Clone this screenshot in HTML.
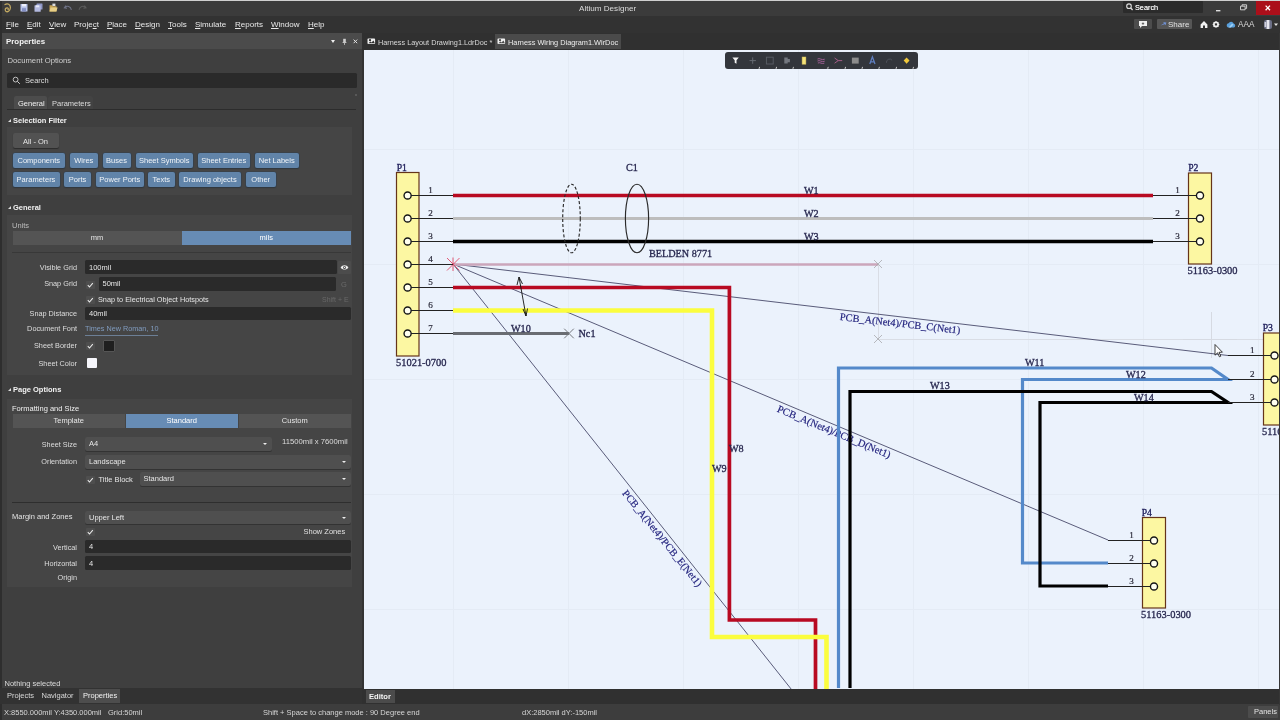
<!DOCTYPE html>
<html lang="en">
<head>
<meta charset="utf-8">
<title>Altium Designer</title>
<style>
*{box-sizing:border-box;margin:0;padding:0}
html,body{width:1280px;height:720px;overflow:hidden;background:#3f3f3f}
body{position:relative;font-family:"Liberation Sans",sans-serif;font-size:7.5px;color:#e4e4e4;line-height:1}
.a{position:absolute}
.t{position:absolute;white-space:nowrap;line-height:10px;height:10px}
#root{position:absolute;left:0;top:0;width:1280px;height:720px;will-change:transform}
.b{font-weight:bold}
u{text-decoration:underline;text-underline-offset:0.6px;text-decoration-thickness:0.6px}
/* chrome */
#topline{left:0;top:0;width:1280px;height:1px;background:#cfcfcf}
#title{left:0;top:1px;width:1280px;height:15px;background:#3b3b3b}
#menu{left:0;top:16px;width:1280px;height:17px;background:#323232}
#tabbar{left:362px;top:33px;width:918px;height:17px;background:#303030}
#lpanel{left:0;top:33px;width:362px;height:671px;background:#3f3f3f}
#phead{left:2px;top:33px;width:360px;height:16px;background:#4b4b4b}
#gap{left:362px;top:50px;width:3px;height:654px;background:#333}
#canvas{left:364px;top:50px;width:916px;height:639px;background:#ebf2fc}
#edbar{left:362px;top:689px;width:918px;height:15px;background:#303030}
#status{left:0;top:704px;width:1280px;height:16px;background:#3d3d3d}
.in{position:absolute;background:#2a2a2a;border-radius:1.5px}
.dd{position:absolute;background:#4f4f4f;border-radius:2px;box-shadow:0 1px 0 #333}
.chip{position:absolute;height:15px;background:#6184a9;border-radius:2px;color:#f0f4f8;text-align:center;line-height:15px;font-size:7.5px;white-space:nowrap;box-shadow:0 0 0 0.6px #33414f,0 1px 1px #2e2e2e}
.seg{position:absolute;height:13.5px;line-height:14.5px;text-align:center;background:#545454;color:#e6e6e6}
.seg.on{background:#678cb5;color:#fff}
.lbl{position:absolute;white-space:nowrap;line-height:10px;height:10px;text-align:right;width:80px;font-size:7.3px}
.cb{position:absolute;width:8.5px;height:8.5px;background:#4e4e4e;border-radius:1px}
.cb svg{position:absolute;left:0;top:0}
.sect{position:absolute;left:13px;font-weight:bold;color:#f2f2f2;white-space:nowrap;line-height:10px}
.tri{position:absolute;left:8px;width:0;height:0;border-left:3px solid transparent;border-bottom:3px solid #ddd}
.car{position:absolute;width:0;height:0;border-left:2.6px solid transparent;border-right:2.6px solid transparent;border-top:2.8px solid #eee}
</style>
</head>
<body>
<div id="root">
<div class="a" id="title"></div>
<div class="a" id="menu"></div>
<div class="a" id="lpanel"></div>
<div class="a" id="phead"></div>
<div class="a" id="tabbar"></div>
<div class="a" id="gap"></div>
<div class="a" id="canvas"></div>
<div class="a" id="edbar"></div>
<div class="a" style="left:1278.5px;top:33px;width:1.5px;height:672px;background:#363636;z-index:5"></div>
<div class="a" id="status"></div>
<div class="a" style="left:0;top:1px;width:1.5px;height:719px;background:#2e2e2e"></div>
<div class="a" id="topline"></div>


<!-- title bar icons -->
<svg class="a" style="left:0;top:1px" width="100" height="15" viewBox="0 0 100 15">
 <path d="M5 3.6 C7.6 1.8 10.6 3.6 10.4 6.8 C10.2 10 7.4 11.6 5.8 10.2 C4.4 8.8 5.6 6.6 7.4 6.8 C8.4 7 8.6 8 8 8.6" fill="none" stroke="#c4aa62" stroke-width="1.25" stroke-linecap="round"/>
 <rect x="20.5" y="3" width="7" height="7.5" rx="0.6" fill="#b9c4ea"/><rect x="22" y="3" width="4" height="2.4" fill="#eef0fb"/><rect x="22" y="7.2" width="4" height="3.3" fill="#8490c4"/>
 <rect x="36.5" y="2.5" width="6" height="6" rx="0.5" fill="#8f97c6"/><rect x="34.5" y="4.3" width="6.2" height="6.4" rx="0.5" fill="#b3b9e0"/><rect x="35.8" y="4.3" width="3.4" height="2" fill="#e6e8f6"/>
 <path d="M49.5 4.2 h2.6 l0.8 1 h3.6 v5.4 h-7 Z" fill="#c7a555"/><path d="M50.6 6.6 h7 l-1.2 4 h-6.9 Z" fill="#e8cf86"/><rect x="52.4" y="2.6" width="3" height="2.4" fill="#ddd"/>
 <path d="M66 4.6 l-1.6 2.2 l2.6 0.4 M64.8 6.4 C67 4.4 70.6 5 71.4 8.8" fill="none" stroke="#6f7387" stroke-width="1.1"/>
 <path d="M84.4 4.6 l1.6 2.2 l-2.6 0.4 M85.6 6.4 C83.4 4.4 79.8 5 79 8.8" fill="none" stroke="#5b5b5b" stroke-width="1.1"/>
</svg>
<div class="t" style="left:579px;top:4px;font-size:8.1px;color:#dcdcdc">Altium Designer</div>
<!-- search box -->
<div class="a" style="left:1123px;top:1px;width:80px;height:12px;background:#2b2b2b;border-radius:1px"></div>
<svg class="a" style="left:1125px;top:2px" width="10" height="10" viewBox="0 0 10 10"><circle cx="4" cy="4.2" r="2.3" fill="none" stroke="#ddd" stroke-width="1.1"/><path d="M5.7 6 L7.6 8" stroke="#ddd" stroke-width="1.3"/></svg>
<div class="t" style="left:1135px;top:3px;font-size:7.3px;color:#ececec;text-shadow:0 0 0.3px #ececec">Search</div>
<!-- window buttons -->
<div class="a" style="left:1256px;top:1px;width:24px;height:14px;background:#ab0f1a"></div>
<svg class="a" style="left:1200px;top:1px" width="80" height="15" viewBox="0 0 80 15">
 <rect x="16" y="9" width="4.4" height="1.4" fill="#ddd"/>
 <path d="M40.5 5.2 h4.6 v3.6 h-4.6 Z M42 5 v-1.2 h4.6 v3.6 h-1.3" fill="none" stroke="#ddd" stroke-width="0.9"/>
 <path d="M65.6 4.6 l4.4 4.6 M70 4.6 l-4.4 4.6" stroke="#fff" stroke-width="1.3"/>
</svg>


<div class="t" style="left:6px;top:20px;font-size:8px;color:#e8e8e8"><u>F</u>ile</div>
<div class="t" style="left:27px;top:20px;font-size:8px;color:#e8e8e8"><u>E</u>dit</div>
<div class="t" style="left:49px;top:20px;font-size:8px;color:#e8e8e8"><u>V</u>iew</div>
<div class="t" style="left:74px;top:20px;font-size:8px;color:#e8e8e8">Proje<u>c</u>t</div>
<div class="t" style="left:107px;top:20px;font-size:8px;color:#e8e8e8"><u>P</u>lace</div>
<div class="t" style="left:135px;top:20px;font-size:8px;color:#e8e8e8"><u>D</u>esign</div>
<div class="t" style="left:168px;top:20px;font-size:8px;color:#e8e8e8"><u>T</u>ools</div>
<div class="t" style="left:195px;top:20px;font-size:8px;color:#e8e8e8"><u>S</u>imulate</div>
<div class="t" style="left:235px;top:20px;font-size:8px;color:#e8e8e8"><u>R</u>eports</div>
<div class="t" style="left:271px;top:20px;font-size:8px;color:#e8e8e8"><u>W</u>indow</div>
<div class="t" style="left:308px;top:20px;font-size:8px;color:#e8e8e8"><u>H</u>elp</div>
<!-- right side menu icons -->
<div class="a" style="left:1134px;top:19px;width:18px;height:10px;background:#4c4c4c;border-radius:1px"></div>
<svg class="a" style="left:1138px;top:20px" width="10" height="9" viewBox="0 0 10 9"><path d="M1 1 h8 v5 h-5 l-2 2 v-2 h-1 Z" fill="#f0f0f0"/><path d="M5 2.4 v2.4 M3.8 3.6 h2.4" stroke="#4c4c4c" stroke-width="0.8"/></svg>
<div class="a" style="left:1157px;top:19px;width:35px;height:10px;background:#565656;border-radius:1px"></div>
<svg class="a" style="left:1160px;top:21px" width="7" height="6" viewBox="0 0 7 6"><path d="M0.5 4.5 L4 2.2 L3.2 1 L6.4 1.4 L5.6 4.2 L4.8 3.2 Z" fill="#6f8fd0"/></svg>
<div class="t" style="left:1168px;top:20px;font-size:8px;color:#e2e2e2">Share</div>
<svg class="a" style="left:1198px;top:18px" width="82" height="13" viewBox="0 0 82 13">
 <path d="M2.6 6.4 L6 3 L9.4 6.4 V10 H7 V7.6 H5 V10 H2.6 Z" fill="#f2f2f2"/>
 <circle cx="18" cy="6.4" r="2.2" fill="none" stroke="#f2f2f2" stroke-width="1.5"/><path d="M18 3 v6.8 M14.6 6.4 h6.8 M15.6 4 l4.8 4.8 M20.4 4 l-4.8 4.8" stroke="#f2f2f2" stroke-width="0.9"/><circle cx="18" cy="6.4" r="1.1" fill="#323232"/>
 <path d="M30 9.4 a2.2 2.2 0 0 1 0.6 -4.2 a2.8 2.8 0 0 1 5.2 0.6 a1.9 1.9 0 0 1 0.2 3.6 Z" fill="#5aa0dc"/><path d="M30.6 9.4 l3.4 -3.6 l1.6 0.6 l-2.8 3 Z" fill="#9fd0f4"/>
 <rect x="66" y="2" width="8" height="9" rx="2" fill="#6b6f86"/><rect x="68.6" y="2" width="2.8" height="9" fill="#e6e6ee"/><rect x="66.6" y="4" width="1.6" height="5" fill="#cfd0dc"/>
 <path d="M76 5.6 h4 l-2 2.4 Z" fill="#e6e6e6"/>
</svg>
<div class="t" style="left:1238px;top:20px;font-size:8.2px;color:#dcdcdc">AAA</div>

<div class="t b" style="left:6px;top:36.5px;font-size:7.9px;color:#f4f4f4">Properties</div>
<div class="car" style="left:330.6px;top:39.5px;border-top-color:#f0f0f0;border-left-width:2.9px;border-right-width:2.9px;border-top-width:3.4px"></div>
<svg class="a" style="left:341px;top:37.5px" width="7" height="9" viewBox="0 0 7 9"><rect x="2.2" y="0.8" width="2.6" height="3.4" fill="#cfcfcf"/><rect x="1.6" y="4" width="3.8" height="0.9" fill="#cfcfcf"/><rect x="3.1" y="4.9" width="0.8" height="2" fill="#cfcfcf"/></svg>
<svg class="a" style="left:352px;top:38px" width="7" height="7" viewBox="0 0 7 7"><path d="M1.6 1.6 L5.2 5.2 M5.2 1.6 L1.6 5.2" stroke="#e2e2e2" stroke-width="1"/></svg>
<div class="t" style="left:7.5px;top:55.5px;color:#cfcfcf;font-size:7.7px">Document Options</div>
<div class="in" style="left:7px;top:72.5px;width:350px;height:15.0px"></div>
<svg class="a" style="left:12px;top:76px" width="9" height="9" viewBox="0 0 9 9"><circle cx="3.6" cy="3.6" r="2.4" fill="none" stroke="#cfcfcf" stroke-width="0.9"/><path d="M5.4 5.4 L7.8 7.8" stroke="#cfcfcf" stroke-width="1"/></svg>
<div class="t" style="left:25px;top:75.5px;color:#dcdcdc">Search</div>
<div class="a" style="left:14px;top:96px;width:33px;height:13px;background:#4c4c4c;border-radius:2px 2px 0 0"></div>
<div class="a" style="left:48px;top:96px;width:45px;height:13px;background:#434343;border-radius:2px 2px 0 0"></div>
<div class="a" style="left:7px;top:109px;width:349px;height:1px;background:#2c2c2c"></div>
<div class="a" style="left:354.5px;top:94px;width:2px;height:1.5px;background:#585858"></div>
<div class="t" style="left:18px;top:98.5px;color:#f0f0f0">General</div>
<div class="t" style="left:52px;top:98.5px;color:#dcdcdc">Parameters</div>
<div class="a" style="left:7px;top:127px;width:345px;height:68px;background:#454545"></div>
<div class="a" style="left:7px;top:215px;width:345px;height:160px;background:#454545"></div>
<div class="a" style="left:7px;top:399px;width:345px;height:188px;background:#454545"></div>
<div class="tri" style="top:118.5px"></div><div class="sect" style="top:115.5px">Selection Filter</div>
<div class="a" style="left:13px;top:133px;width:46px;height:15px;background:#525252;border-radius:2px;box-shadow:0 1px 1px #2c2c2c"></div>
<div class="t" style="left:23px;top:136.5px;color:#e6e6e6">All - On</div>
<div class="chip" style="left:12.5px;top:153px;width:52.5px">Components</div>
<div class="chip" style="left:69.5px;top:153px;width:28.5px">Wires</div>
<div class="chip" style="left:102.5px;top:153px;width:28.0px">Buses</div>
<div class="chip" style="left:135.5px;top:153px;width:57.5px">Sheet Symbols</div>
<div class="chip" style="left:198px;top:153px;width:51.5px">Sheet Entries</div>
<div class="chip" style="left:254.5px;top:153px;width:44.5px">Net Labels</div>
<div class="chip" style="left:12.5px;top:172px;width:47.0px">Parameters</div>
<div class="chip" style="left:64px;top:172px;width:27px">Ports</div>
<div class="chip" style="left:95.5px;top:172px;width:48.5px">Power Ports</div>
<div class="chip" style="left:148px;top:172px;width:26.5px">Texts</div>
<div class="chip" style="left:179px;top:172px;width:62px">Drawing objects</div>
<div class="chip" style="left:246px;top:172px;width:29.5px">Other</div>
<div class="tri" style="top:206px"></div><div class="sect" style="top:203px">General</div>
<div class="t" style="left:12px;top:221px;color:#bcbcbc">Units</div>
<div class="seg" style="left:12.5px;top:231px;width:169px">mm</div><div class="seg on" style="left:181.5px;top:231px;width:169.5px">mils</div>
<div class="a" style="left:12px;top:252px;width:339px;height:1px;background:#383838"></div>
<div class="lbl" style="left:-3px;top:262.5px;color:#dedede">Visible Grid</div>
<div class="in" style="left:85px;top:260px;width:252px;height:14px"></div>
<div class="t" style="left:89px;top:262.95px;color:#e6e6e6">100mil</div>
<div class="a" style="left:338px;top:260.5px;width:13px;height:13.5px;background:#4c4c4c;border-radius:1px"></div>
<svg class="a" style="left:340px;top:264px" width="9" height="7" viewBox="0 0 9 7"><path d="M0.6 3.4 C2.4 0.6 6.6 0.6 8.4 3.4 C6.6 6.2 2.4 6.2 0.6 3.4 Z" fill="#f0f0f0"/><circle cx="4.5" cy="3.4" r="1.5" fill="#4c4c4c"/><circle cx="4.5" cy="3.4" r="0.7" fill="#f0f0f0"/></svg>
<div class="lbl" style="left:-3px;top:278.5px;color:#dedede">Snap Grid</div>
<div class="cb" style="left:86.3px;top:280.5px"><svg width="8.5" height="8.5" viewBox="0 0 8.5 8.5"><path d="M1.8 4.2 L3.5 6 L6.8 2.2" fill="none" stroke="#ececec" stroke-width="1.05"/></svg></div>
<div class="in" style="left:98.5px;top:276.5px;width:237.5px;height:14px"></div>
<div class="t" style="left:102.5px;top:279.45px;color:#e6e6e6">50mil</div>
<div class="t" style="left:341px;top:280px;color:#6a6a6a">G</div>
<div class="cb" style="left:86.3px;top:295.5px"><svg width="8.5" height="8.5" viewBox="0 0 8.5 8.5"><path d="M1.8 4.2 L3.5 6 L6.8 2.2" fill="none" stroke="#ececec" stroke-width="1.05"/></svg></div>
<div class="t" style="left:98px;top:295px;color:#e4e4e4;font-size:7.3px">Snap to Electrical Object Hotspots</div>
<div class="t" style="left:322px;top:294.5px;color:#686868;font-size:7px">Shift + E</div>
<div class="lbl" style="left:-3px;top:308.5px;color:#dedede">Snap Distance</div>
<div class="in" style="left:85px;top:306.5px;width:266px;height:13.5px"></div>
<div class="t" style="left:89px;top:308.95px;color:#e6e6e6">40mil</div>
<div class="lbl" style="left:-3px;top:323.5px;color:#dedede">Document Font</div>
<div class="t" style="left:85px;top:323.5px;color:#809cbf;font-size:7.25px;border-bottom:1px solid #6c7f96;height:12px">Times New Roman, 10</div>
<div class="lbl" style="left:-3px;top:341px;color:#dedede">Sheet Border</div>
<div class="cb" style="left:86.3px;top:341.5px"><svg width="8.5" height="8.5" viewBox="0 0 8.5 8.5"><path d="M1.8 4.2 L3.5 6 L6.8 2.2" fill="none" stroke="#ececec" stroke-width="1.05"/></svg></div>
<div class="a" style="left:102.5px;top:339.5px;width:12px;height:12px;background:#1f1f1f;border:1px solid #555;border-radius:1px"></div>
<div class="lbl" style="left:-3px;top:358.5px;color:#dedede">Sheet Color</div>
<div class="a" style="left:86.8px;top:357.5px;width:10.4px;height:10.7px;background:#f6f6fb;border-radius:1px"></div>
<div class="tri" style="top:388px"></div><div class="sect" style="top:385px">Page Options</div>
<div class="t" style="left:12px;top:404px;color:#f0f0f0">Formatting and Size</div>
<div class="seg" style="left:12.5px;top:414px;width:112.5px">Template</div><div class="seg on" style="left:125.5px;top:414px;width:112.5px">Standard</div><div class="seg" style="left:238.5px;top:414px;width:112.5px">Custom</div>
<div class="lbl" style="left:-3px;top:439.5px;color:#dedede">Sheet Size</div>
<div class="dd" style="left:85px;top:437px;width:187px;height:13.5px"></div>
<div class="car" style="left:262.5px;top:442.75px"></div>
<div class="t" style="left:89px;top:439.45px;color:#e6e6e6">A4</div>
<div class="t" style="left:282px;top:436.5px;color:#dcdcdc;font-size:7.7px">11500mil x 7600mil</div>
<div class="lbl" style="left:-3px;top:457px;color:#dedede">Orientation</div>
<div class="dd" style="left:85px;top:455px;width:266px;height:13.5px"></div>
<div class="car" style="left:341.5px;top:460.75px"></div>
<div class="t" style="left:89px;top:457.45px;color:#e6e6e6">Landscape</div>
<div class="cb" style="left:86.3px;top:475.5px"><svg width="8.5" height="8.5" viewBox="0 0 8.5 8.5"><path d="M1.8 4.2 L3.5 6 L6.8 2.2" fill="none" stroke="#ececec" stroke-width="1.05"/></svg></div>
<div class="t" style="left:98.5px;top:474.5px;color:#e4e4e4">Title Block</div>
<div class="dd" style="left:139.5px;top:472px;width:211.5px;height:13.5px"></div>
<div class="car" style="left:341.5px;top:477.75px"></div>
<div class="t" style="left:143.5px;top:474.45px;color:#e6e6e6">Standard</div>
<div class="a" style="left:12px;top:502px;width:339px;height:1px;background:#2e2e2e"></div>
<div class="t" style="left:12px;top:511.5px;color:#e4e4e4">Margin and Zones</div>
<div class="dd" style="left:85px;top:511px;width:266px;height:13px"></div>
<div class="car" style="left:341.5px;top:516.5px"></div>
<div class="t" style="left:89px;top:513.20px;color:#e6e6e6">Upper Left</div>
<div class="cb" style="left:86.3px;top:527.5px"><svg width="8.5" height="8.5" viewBox="0 0 8.5 8.5"><path d="M1.8 4.2 L3.5 6 L6.8 2.2" fill="none" stroke="#ececec" stroke-width="1.05"/></svg></div>
<div class="t" style="left:303.5px;top:527px;color:#e0e0e0">Show Zones</div>
<div class="lbl" style="left:-3px;top:542.5px;color:#dedede">Vertical</div>
<div class="in" style="left:85px;top:539.5px;width:266px;height:13.5px"></div>
<div class="t" style="left:89px;top:542.45px;color:#e6e6e6">4</div>
<div class="lbl" style="left:-3px;top:559px;color:#dedede">Horizontal</div>
<div class="in" style="left:85px;top:556px;width:266px;height:14.3px"></div>
<div class="t" style="left:89px;top:559.20px;color:#e6e6e6">4</div>
<div class="lbl" style="left:-3px;top:572.5px;color:#dedede">Origin</div>
<div class="t" style="left:4.5px;top:678.5px;color:#dcdcdc">Nothing selected</div>


<div class="a" style="left:495px;top:34px;width:126px;height:15px;background:#4a4a4a"></div>
<svg class="a" style="left:367px;top:37px" width="9" height="8" viewBox="0 0 9 8"><rect x="0.5" y="1.6" width="7.6" height="5.4" rx="0.8" fill="#f2f2f2"/><circle cx="3" cy="3.2" r="1.1" fill="#2c2c2c"/><path d="M1.4 6.2 L3.4 4.6 L4.6 5.4 L6.4 3.6 L7.8 6.2 Z" fill="#2c2c2c"/></svg>
<svg class="a" style="left:497px;top:37px" width="9" height="8" viewBox="0 0 9 8"><rect x="0.5" y="1.6" width="7.6" height="5.4" rx="0.8" fill="#f2f2f2"/><circle cx="3" cy="3.2" r="1.1" fill="#4a4a4a"/><path d="M1.4 6.2 L3.4 4.6 L4.6 5.4 L6.4 3.6 L7.8 6.2 Z" fill="#4a4a4a"/></svg>
<div class="t" style="left:378px;top:37.5px;font-size:7.3px;color:#d8d8d8">Harness Layout Drawing1.LdrDoc *</div>
<div class="t" style="left:508px;top:37.5px;font-size:7.35px;color:#ededed">Harness Wiring Diagram1.WirDoc</div>

<svg class="a" style="left:364px;top:50px" width="916" height="639" viewBox="364 50 916 639" font-family="Liberation Serif, serif">
<path d="M453.5 50V689M568.5 50V689M683.5 50V689M798.5 50V689M913.5 50V689M1028.5 50V689M1143.5 50V689M1258.5 50V689M364 149.5H1280M364 264.5H1280M364 379.5H1280M364 494.5H1280M364 609.5H1280M364 724.5H1280" stroke="#e4ebf5" stroke-width="1" fill="none"/>
<path d="M878.5 264V339M878 339.5H1280" stroke="#d9dde5" stroke-width="1" fill="none"/>
<path d="M1211.5 312V358M1183 339.5H1237" stroke="#d6dae2" stroke-width="1" fill="none"/>
<g stroke="#3e4062" stroke-width="0.85" fill="none"><path d="M453 264L1228 355.5"/><path d="M453 264L1108 540"/><path d="M453 264L791.5 689.5"/></g>
<text x="839.5" y="320" font-size="10.4" fill="#24247f" stroke="#24247f" stroke-width="0.18" transform="rotate(6.5 839.5 320)">PCB_A(Net4)/PCB_C(Net1)</text>
<text x="776.5" y="411.5" font-size="10.4" fill="#24247f" stroke="#24247f" stroke-width="0.18" transform="rotate(22.6 776.5 411.5)">PCB_A(Net4)/PCB_D(Net1)</text>
<text x="621.8" y="493.4" font-size="10.4" fill="#24247f" stroke="#24247f" stroke-width="0.18" transform="rotate(51.2 621.8 493.4)">PCB_A(Net4)/PCB_E(Net1)</text>
<path d="M453 195.5H1153" stroke="#b80a22" stroke-width="3.7" fill="none"/>
<path d="M453 218.5H1153" stroke="#bdbdbd" stroke-width="3" fill="none"/>
<path d="M453 241.5H1153" stroke="#000" stroke-width="3.6" fill="none"/>
<path d="M453 264.5H878" stroke="#cba6bb" stroke-width="2.6" fill="none"/>
<path d="M453 287.5H729.4V620H815.5V689" stroke="#b80a22" stroke-width="3.7" fill="none" stroke-linejoin="miter"/>
<path d="M453 310.5H712V637H826.5V689" stroke="#fbfd3e" stroke-width="4.6" fill="none"/>
<path d="M453 333.5H569" stroke="#696c72" stroke-width="3" fill="none"/>
<path d="M838.5 688V368H1211.5L1228 379.5H1022.5V563H1108" stroke="#5489ca" stroke-width="3.2" fill="none" stroke-linejoin="miter"/>
<path d="M850 688V391.5H1211.5L1228 402.5H1040V586H1108" stroke="#000" stroke-width="3.2" fill="none" stroke-linejoin="miter"/>
<path d="M447 258L459.5 270.5M459.5 258L447 270.5M453 257.5V271" stroke="#e04868" stroke-width="0.9" fill="none"/>
<path d="M874 260L882 268M882 260L874 268M874 335L882 343M882 335L874 343" stroke="#a8a8ac" stroke-width="0.8" fill="none"/>
<path d="M564.2 328.7L573.8 338.3M573.8 328.7L564.2 338.3" stroke="#74777c" stroke-width="1" fill="none"/>
<path d="M519 277L526 316M519 277L517 285M519 277L522.5 284M526 316L523 309M526 316L527.5 308.5" stroke="#111" stroke-width="0.9" fill="none"/>
<ellipse cx="571.5" cy="218.5" rx="8.8" ry="34.3" fill="none" stroke="#2a2a2a" stroke-width="1.15" stroke-dasharray="3 2"/>
<ellipse cx="637" cy="218.5" rx="11.6" ry="34.3" fill="none" stroke="#2a2a2a" stroke-width="1.15"/>
<rect x="396.5" y="172.5" width="22.5" height="183.5" fill="#fcf7a2" stroke="#653419" stroke-width="1.2"/>
<path d="M410.5 195.5H453" stroke="#222" stroke-width="1.1"/><circle cx="407.6" cy="195.5" r="3.55" fill="#fffff0" stroke="#161616" stroke-width="1.4"/><text x="430.5" y="193.1" font-size="9.1" fill="#2a2a3a" stroke="#2a2a3a" stroke-width="0.2" text-anchor="middle">1</text>
<path d="M410.5 218.5H453" stroke="#222" stroke-width="1.1"/><circle cx="407.6" cy="218.5" r="3.55" fill="#fffff0" stroke="#161616" stroke-width="1.4"/><text x="430.5" y="216.1" font-size="9.1" fill="#2a2a3a" stroke="#2a2a3a" stroke-width="0.2" text-anchor="middle">2</text>
<path d="M410.5 241.5H453" stroke="#222" stroke-width="1.1"/><circle cx="407.6" cy="241.5" r="3.55" fill="#fffff0" stroke="#161616" stroke-width="1.4"/><text x="430.5" y="239.1" font-size="9.1" fill="#2a2a3a" stroke="#2a2a3a" stroke-width="0.2" text-anchor="middle">3</text>
<path d="M410.5 264.5H453" stroke="#222" stroke-width="1.1"/><circle cx="407.6" cy="264.5" r="3.55" fill="#fffff0" stroke="#161616" stroke-width="1.4"/><text x="430.5" y="262.1" font-size="9.1" fill="#2a2a3a" stroke="#2a2a3a" stroke-width="0.2" text-anchor="middle">4</text>
<path d="M410.5 287.5H453" stroke="#222" stroke-width="1.1"/><circle cx="407.6" cy="287.5" r="3.55" fill="#fffff0" stroke="#161616" stroke-width="1.4"/><text x="430.5" y="285.1" font-size="9.1" fill="#2a2a3a" stroke="#2a2a3a" stroke-width="0.2" text-anchor="middle">5</text>
<path d="M410.5 310.5H453" stroke="#222" stroke-width="1.1"/><circle cx="407.6" cy="310.5" r="3.55" fill="#fffff0" stroke="#161616" stroke-width="1.4"/><text x="430.5" y="308.1" font-size="9.1" fill="#2a2a3a" stroke="#2a2a3a" stroke-width="0.2" text-anchor="middle">6</text>
<path d="M410.5 333.5H453" stroke="#222" stroke-width="1.1"/><circle cx="407.6" cy="333.5" r="3.55" fill="#fffff0" stroke="#161616" stroke-width="1.4"/><text x="430.5" y="331.1" font-size="9.1" fill="#2a2a3a" stroke="#2a2a3a" stroke-width="0.2" text-anchor="middle">7</text>
<text x="396.7" y="170.5" font-size="9.7" fill="#20205c" stroke="#20205c" stroke-width="0.3">P1</text>
<text x="396" y="366.3" font-size="10.45" fill="#27274f" stroke="#27274f" stroke-width="0.3">51021-0700</text>
<rect x="1188.5" y="173" width="23.0" height="91" fill="#fcf7a2" stroke="#653419" stroke-width="1.2"/>
<path d="M1153 195.5H1196.8" stroke="#222" stroke-width="1.1"/><circle cx="1200" cy="195.5" r="3.55" fill="#fffff0" stroke="#161616" stroke-width="1.4"/><text x="1177.5" y="193.1" font-size="9.1" fill="#2a2a3a" stroke="#2a2a3a" stroke-width="0.2" text-anchor="middle">1</text>
<path d="M1153 218.5H1196.8" stroke="#222" stroke-width="1.1"/><circle cx="1200" cy="218.5" r="3.55" fill="#fffff0" stroke="#161616" stroke-width="1.4"/><text x="1177.5" y="216.1" font-size="9.1" fill="#2a2a3a" stroke="#2a2a3a" stroke-width="0.2" text-anchor="middle">2</text>
<path d="M1153 241.5H1196.8" stroke="#222" stroke-width="1.1"/><circle cx="1200" cy="241.5" r="3.55" fill="#fffff0" stroke="#161616" stroke-width="1.4"/><text x="1177.5" y="239.1" font-size="9.1" fill="#2a2a3a" stroke="#2a2a3a" stroke-width="0.2" text-anchor="middle">3</text>
<text x="1188.2" y="171" font-size="9.7" fill="#20205c" stroke="#20205c" stroke-width="0.3">P2</text>
<text x="1187.5" y="274.3" font-size="10.45" fill="#27274f" stroke="#27274f" stroke-width="0.3">51163-0300</text>
<rect x="1263.5" y="333" width="26.5" height="92" fill="#fcf7a2" stroke="#653419" stroke-width="1.2"/>
<path d="M1228 355.5H1271" stroke="#222" stroke-width="1.1"/><circle cx="1274.5" cy="355.5" r="3.55" fill="#fffff0" stroke="#161616" stroke-width="1.4"/><text x="1252.3" y="353.1" font-size="9.1" fill="#2a2a3a" stroke="#2a2a3a" stroke-width="0.2" text-anchor="middle">1</text>
<path d="M1228 379.5H1271" stroke="#222" stroke-width="1.1"/><circle cx="1274.5" cy="379.5" r="3.55" fill="#fffff0" stroke="#161616" stroke-width="1.4"/><text x="1252.3" y="376.6" font-size="9.1" fill="#2a2a3a" stroke="#2a2a3a" stroke-width="0.2" text-anchor="middle">2</text>
<path d="M1228 402.5H1271" stroke="#222" stroke-width="1.1"/><circle cx="1274.5" cy="402.5" r="3.55" fill="#fffff0" stroke="#161616" stroke-width="1.4"/><text x="1252.3" y="400.1" font-size="9.1" fill="#2a2a3a" stroke="#2a2a3a" stroke-width="0.2" text-anchor="middle">3</text>
<text x="1262.7" y="331" font-size="9.7" fill="#20205c" stroke="#20205c" stroke-width="0.3">P3</text>
<text x="1262" y="435.3" font-size="10.45" fill="#27274f" stroke="#27274f" stroke-width="0.3">51163-0300</text>
<rect x="1142.5" y="517.5" width="23.0" height="90.5" fill="#fcf7a2" stroke="#653419" stroke-width="1.2"/>
<path d="M1108 540.5H1150.8" stroke="#222" stroke-width="1.1"/><circle cx="1154" cy="540.5" r="3.55" fill="#fffff0" stroke="#161616" stroke-width="1.4"/><text x="1131.5" y="537.6" font-size="9.1" fill="#2a2a3a" stroke="#2a2a3a" stroke-width="0.2" text-anchor="middle">1</text>
<path d="M1108 563.5H1150.8" stroke="#222" stroke-width="1.1"/><circle cx="1154" cy="563.5" r="3.55" fill="#fffff0" stroke="#161616" stroke-width="1.4"/><text x="1131.5" y="560.6" font-size="9.1" fill="#2a2a3a" stroke="#2a2a3a" stroke-width="0.2" text-anchor="middle">2</text>
<path d="M1108 586.5H1150.8" stroke="#222" stroke-width="1.1"/><circle cx="1154" cy="586.5" r="3.55" fill="#fffff0" stroke="#161616" stroke-width="1.4"/><text x="1131.5" y="583.6" font-size="9.1" fill="#2a2a3a" stroke="#2a2a3a" stroke-width="0.2" text-anchor="middle">3</text>
<text x="1141.7" y="515.5" font-size="9.7" fill="#20205c" stroke="#20205c" stroke-width="0.3">P4</text>
<text x="1141" y="618.3" font-size="10.45" fill="#27274f" stroke="#27274f" stroke-width="0.3">51163-0300</text>
<text x="804" y="193.7" font-size="10.2" fill="#27274f" stroke="#27274f" stroke-width="0.3" >W1</text>
<text x="804" y="216.7" font-size="10.2" fill="#27274f" stroke="#27274f" stroke-width="0.3" >W2</text>
<text x="804" y="239.7" font-size="10.2" fill="#27274f" stroke="#27274f" stroke-width="0.3" >W3</text>
<text x="626" y="170.5" font-size="10.2" fill="#27274f" stroke="#27274f" stroke-width="0.3" >C1</text>
<text x="649" y="256.5" font-size="10.2" fill="#27274f" stroke="#27274f" stroke-width="0.3" >BELDEN 8771</text>
<text x="511" y="332.2" font-size="10.2" fill="#27274f" stroke="#27274f" stroke-width="0.3" >W10</text>
<text x="578.5" y="337" font-size="10.2" fill="#27274f" stroke="#27274f" stroke-width="0.3" >Nc1</text>
<text x="729" y="451.7" font-size="10.2" fill="#27274f" stroke="#27274f" stroke-width="0.3" >W8</text>
<text x="712" y="472.2" font-size="10.2" fill="#27274f" stroke="#27274f" stroke-width="0.3" >W9</text>
<text x="1025" y="366.2" font-size="10.2" fill="#27274f" stroke="#27274f" stroke-width="0.3" >W11</text>
<text x="1126" y="377.7" font-size="10.2" fill="#27274f" stroke="#27274f" stroke-width="0.3" >W12</text>
<text x="930" y="389.2" font-size="10.2" fill="#27274f" stroke="#27274f" stroke-width="0.3" >W13</text>
<text x="1134" y="400.7" font-size="10.2" fill="#27274f" stroke="#27274f" stroke-width="0.3" >W14</text>
<path d="M1215 344.5V355.2L1217.6 352.8L1219.4 356.8L1220.8 356.2L1219 352.3L1222.4 352.2Z" fill="#fff" stroke="#111" stroke-width="0.8"/>
</svg>
<div class="a" style="left:725px;top:52px;width:193px;height:17px;background:#33363c;border-radius:3px"></div>
<svg class="a" style="left:725px;top:52px" width="193" height="17" viewBox="0 0 193 17">
 <g transform="translate(10.6 8.6)"><path d="M-3.2 -3.2 h6.4 l-2.3 2.9 v3.4 l-1.8 -1 v-2.4 Z" fill="#f4f4f4"/></g>
 <g transform="translate(27.7 8.6)"><path d="M0 -3.2 v6.4 M-3.2 0 h6.4" stroke="#666a72" stroke-width="1"/></g>
 <g transform="translate(44.8 8.6)"><rect x="-3.4" y="-3.4" width="6.8" height="6.8" fill="none" stroke="#5a5e66" stroke-width="0.9"/></g>
 <g transform="translate(61.9 8.6)"><path d="M-2.6 -3 h3.4 v1.3 h2.2 v3.4 h-2.2 v1.3 h-3.4 Z" fill="#747880"/></g>
 <g transform="translate(79.0 8.6)"><rect x="-1.9" y="-3.6" width="3.8" height="7.2" fill="#f4e27a" stroke="#d8c258" stroke-width="0.5"/></g>
 <g transform="translate(96.1 8.6)"><path d="M-3.6 -1.6 c2.2 -1.6 4 1.8 7.2 0.2 M-3.6 0.4 c2.2 -1.6 4 1.8 7.2 0.2 M-3.2 2.4 c2.2 -1.2 3.8 1.4 6.4 0.2" stroke="#a8629c" stroke-width="0.9" fill="none"/></g>
 <g transform="translate(113.2 8.6)"><path d="M-3.6 -2.6 l3.6 2.6 l-3.6 2.6 M0 0 h4" stroke="#b0628e" stroke-width="0.9" fill="none"/></g>
 <g transform="translate(130.3 8.6)"><rect x="-3.4" y="-3" width="6.8" height="6" fill="#8c8c8c"/></g>
 <g transform="translate(147.4 8.6)"><path d="M-2.6 3.4 l2.6 -7.2 l2.6 7.2 M-1.7 1.2 h3.4" stroke="#5f7fc0" stroke-width="1.3" fill="none"/></g>
 <g transform="translate(164.5 8.6)"><path d="M-3 2.2 a3.2 3.2 0 0 1 5.6 -2.6" stroke="#50545c" stroke-width="0.9" fill="none"/></g>
 <g transform="translate(181.6 8.6)"><path d="M0 -3.2 l2.9 3.2 l-2.9 3.2 l-2.9 -3.2 Z" fill="#f0c83c"/></g>
 <path d="M33.2 16.4 l1.8 -1.8 v1.8Z M50.2 16.4 l1.8 -1.8 v1.8Z M67.0 16.4 l1.8 -1.8 v1.8Z M101.7 16.4 l1.8 -1.8 v1.8Z M119.2 16.4 l1.8 -1.8 v1.8Z M136.1 16.4 l1.8 -1.8 v1.8Z M152.89999999999998 16.4 l1.8 -1.8 v1.8Z M170.2 16.4 l1.8 -1.8 v1.8Z M187.1 16.4 l1.8 -1.8 v1.8Z " fill="#d8d8d8"/>
</svg>


<div class="a" style="left:0;top:688px;width:362px;height:16px;background:#323232"></div>
<div class="a" style="left:79px;top:689px;width:41px;height:14px;background:#4d4d4d"></div>
<div class="t" style="left:7px;top:691px;color:#d8d8d8">Projects</div>
<div class="t" style="left:41.5px;top:691px;color:#d8d8d8">Navigator</div>
<div class="t" style="left:83px;top:691px;color:#f2f2f2">Properties</div>
<div class="a" style="left:366px;top:690px;width:29px;height:13px;background:#4b4b4b"></div>
<div class="t b" style="left:369px;top:692px;font-size:7.6px;color:#f4f4f4">Editor</div>
<div class="t" style="left:4px;top:708px;color:#d6d6d6">X:8550.000mil Y:4350.000mil</div>
<div class="t" style="left:108px;top:708px;color:#d6d6d6">Grid:50mil</div>
<div class="t" style="left:263px;top:708px;color:#d6d6d6">Shift + Space to change mode : 90 Degree end</div>
<div class="t" style="left:522px;top:708px;color:#d6d6d6">dX:2850mil dY:-150mil</div>
<div class="a" style="left:1248px;top:706px;width:30px;height:12px;background:#4c4c4c;border-radius:1px"></div>
<div class="t" style="left:1254px;top:707px;color:#e4e4e4">Panels</div>

</div>
</body>
</html>
